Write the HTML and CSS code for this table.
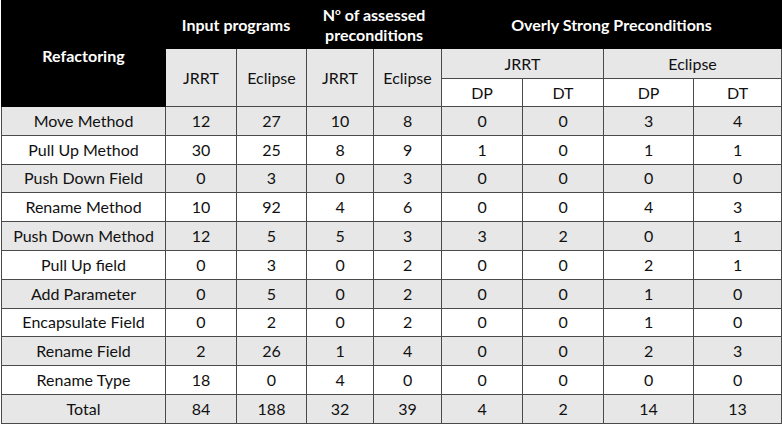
FILE: index.html
```html
<!DOCTYPE html>
<html>
<head>
<meta charset="utf-8">
<link rel="stylesheet" href="styles.css">
</head>
<body>
<table class="tbl">
  <colgroup>
    <col class="c-ref"><col class="c1"><col class="c2"><col class="c3"><col class="c4"><col class="c5"><col class="c6"><col class="c7"><col class="c8">
  </colgroup>
  <thead>
    <tr class="h1">
      <th class="dark ref" rowspan="3">Refactoring</th>
      <th class="dark" colspan="2">Input programs</th>
      <th class="dark" colspan="2">N<sup>o</sup> of assessed<br>preconditions</th>
      <th class="dark" colspan="4">Overly Strong Preconditions</th>
    </tr>
    <tr class="h2">
      <td class="sub" rowspan="2">JRRT</td>
      <td class="sub" rowspan="2">Eclipse</td>
      <td class="sub" rowspan="2">JRRT</td>
      <td class="sub" rowspan="2">Eclipse</td>
      <td class="sub" colspan="2">JRRT</td>
      <td class="sub" colspan="2">Eclipse</td>
    </tr>
    <tr class="h3">
      <td class="leaf">DP</td><td class="leaf">DT</td><td class="leaf">DP</td><td class="leaf">DT</td>
    </tr>
  </thead>
  <tbody>
    <tr class="g"><td>Move Method</td><td>12</td><td>27</td><td>10</td><td>8</td><td>0</td><td>0</td><td>3</td><td>4</td></tr>
    <tr><td>Pull Up Method</td><td>30</td><td>25</td><td>8</td><td>9</td><td>1</td><td>0</td><td>1</td><td>1</td></tr>
    <tr class="g"><td>Push Down Field</td><td>0</td><td>3</td><td>0</td><td>3</td><td>0</td><td>0</td><td>0</td><td>0</td></tr>
    <tr><td>Rename Method</td><td>10</td><td>92</td><td>4</td><td>6</td><td>0</td><td>0</td><td>4</td><td>3</td></tr>
    <tr class="g"><td>Push Down Method</td><td>12</td><td>5</td><td>5</td><td>3</td><td>3</td><td>2</td><td>0</td><td>1</td></tr>
    <tr><td>Pull Up field</td><td>0</td><td>3</td><td>0</td><td>2</td><td>0</td><td>0</td><td>2</td><td>1</td></tr>
    <tr class="g"><td>Add Parameter</td><td>0</td><td>5</td><td>0</td><td>2</td><td>0</td><td>0</td><td>1</td><td>0</td></tr>
    <tr><td>Encapsulate Field</td><td>0</td><td>2</td><td>0</td><td>2</td><td>0</td><td>0</td><td>1</td><td>0</td></tr>
    <tr class="g"><td>Rename Field</td><td>2</td><td>26</td><td>1</td><td>4</td><td>0</td><td>0</td><td>2</td><td>3</td></tr>
    <tr><td>Rename Type</td><td>18</td><td>0</td><td>4</td><td>0</td><td>0</td><td>0</td><td>0</td><td>0</td></tr>
    <tr class="g"><td>Total</td><td>84</td><td>188</td><td>32</td><td>39</td><td>4</td><td>2</td><td>14</td><td>13</td></tr>
  </tbody>
</table>
</body>
</html>
```

FILE: styles.css
```css
html, body {
  margin: 0;
  padding: 0;
  background: #ffffff;
}
body {
  font-family: Lato, "Open Sans", sans-serif;
  font-size: 16px;
  color: #111111;
}
.tbl {
  border-collapse: collapse;
  table-layout: fixed;
  width: 780px;
  margin-left: 1px;
  border-top: 1px solid #7a7a7a;
}
.c-ref { width: 164px; }
.c1 { width: 71px; }
.c2 { width: 70px; }
.c3 { width: 67px; }
.c4 { width: 68px; }
.c5 { width: 81px; }
.c6 { width: 81px; }
.c7 { width: 90px; }
.c8 { width: 88px; }
th, td {
  padding: 0;
  text-align: center;
  vertical-align: middle;
  border: 1px solid #4a4a4a;
  line-height: 18px;
}
.dark {
  background: #000000;
  color: #ffffff;
  font-weight: bold;
  border-color: #000000;
  line-height: 20px;
}
.h1 th { height: 47px; }
.ref { padding-top: 4px; }
.h1 sup { font-size: 10px; line-height: 0; vertical-align: 6px; }
.sub { background: #e7e7e7; }
.h2 td { height: 29px; }
.h3 td { height: 27px; }
.leaf { background: #ffffff; }
tbody td { height: 27.8px; background: #ffffff; }
tbody tr.g td { background: #e7e7e7; }
```
